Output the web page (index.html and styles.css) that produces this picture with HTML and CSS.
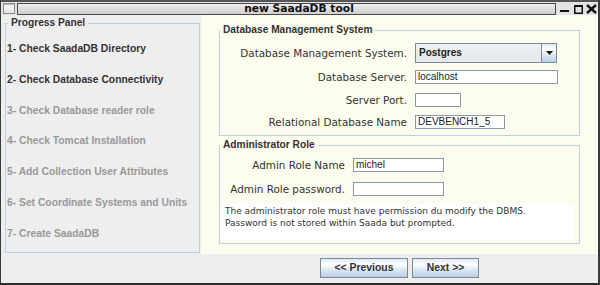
FILE: index.html
```html
<!DOCTYPE html>
<html>
<head>
<meta charset="utf-8">
<title>new SaadaDB tool</title>
<link rel="stylesheet" href="styles.css">
</head>
<body>
<div class="window">
  <div class="titlebar">
    <span class="ticon"></span>
    <div class="tbar">new SaadaDB tool</div>
    <svg class="tctl" viewBox="0 0 42 13" width="42" height="13">
      <rect x="4" y="8" width="9" height="2" fill="#111"/>
      <rect x="18.75" y="3.75" width="7.5" height="7.5" fill="none" stroke="#111" stroke-width="1.5"/>
      <rect x="18" y="3" width="9" height="2" fill="#111"/>
      <path d="M31 3 L40 11 M40 3 L31 11" stroke="#111" stroke-width="2.4" fill="none"/>
    </svg>
  </div>
  <div class="main">
    <div class="left">
      <fieldset class="progress">
        <legend>Progress Panel</legend>
        <ol class="steps">
          <li>1- Check SaadaDB Directory</li>
          <li>2- Check Database Connectivity</li>
          <li class="todo">3- Check Database reader role</li>
          <li class="todo">4- Check Tomcat Installation</li>
          <li class="todo">5- Add Collection User Attributes</li>
          <li class="todo">6- Set Coordinate Systems and Units</li>
          <li class="todo">7- Create SaadaDB</li>
        </ol>
      </fieldset>
    </div>
    <div class="right">
      <div class="panel">
        <fieldset class="group db">
          <legend>Database Management System</legend>
          <div class="form db-form">
            <label class="lbl tall">Database Management System.</label>
            <div class="combo">
              <span class="combo-val">Postgres</span>
              <span class="combo-btn"><svg width="7" height="4" viewBox="0 0 7 4"><path d="M0 0 H7 L3.5 4 Z" fill="#111"/></svg></span>
            </div>
            <label class="lbl">Database Server.</label>
            <div class="field w-server">localhost</div>
            <label class="lbl">Server Port.</label>
            <div class="field w-port"></div>
            <label class="lbl">Relational Database Name</label>
            <div class="field w-rdb">DEVBENCH1_5</div>
          </div>
        </fieldset>
        <fieldset class="group admin">
          <legend>Administrator Role</legend>
          <div class="form admin-form">
            <label class="lbl">Admin Role Name</label>
            <div class="field w-admin">michel</div>
            <label class="lbl">Admin Role password.</label>
            <div class="field w-admin"></div>
          </div>
          <div class="note">The administrator role must have permission du modify the DBMS.<br>Password is not stored within Saada but prompted.</div>
        </fieldset>
      </div>
      <div class="buttons">
        <button class="btn prev">&lt;&lt; Previous</button>
        <button class="btn next">Next &gt;&gt;</button>
      </div>
    </div>
  </div>
</div>
</body>
</html>
```
FILE: styles.css
```css
html, body {
  margin: 0;
  padding: 0;
  background: #eeeeee;
}

.window {
  width: 600px;
  height: 285px;
  box-sizing: border-box;
  border-left: 1px solid #3a3a3a;
  border-right: 2px solid #3a3a3a;
  border-bottom: 2px solid #2e2e2e;
  background: #eeeeee;
  display: flex;
  flex-direction: column;
  font-family: "DejaVu Sans", sans-serif;
  color: #333333;
}

/* ---------- title bar ---------- */
.titlebar {
  height: 15px;
  flex: none;
  box-sizing: border-box;
  border-top: 2px solid #555555;
  background: #e2e2e2;
  display: flex;
  align-items: flex-start;
}

.ticon {
  width: 12px;
  height: 11px;
  flex: none;
  box-sizing: border-box;
  margin: 1px 0 0 2px;
  border: 1px solid #8a8a8a;
  background: linear-gradient(#fbfbfb, #e4e4e4);
  box-shadow: inset 0 1px 0 #bdbdbd;
}

.tbar {
  flex: 1;
  height: 12px;
  margin: 1px 0 0 2px;
  box-sizing: border-box;
  border: 1px solid #4a4a4a;
  background: linear-gradient(#eeeeee, #cecece);
  padding-left: 25px;
  font: bold 10.7px/10px "DejaVu Sans", sans-serif;
  text-align: center;
  color: #111111;
  white-space: nowrap;
}

.tctl {
  width: 42px;
  height: 13px;
  flex: none;
}

/* ---------- main ---------- */
.main {
  flex: 1;
  min-height: 0;
  display: flex;
}

.left {
  width: 200px;
  flex: none;
}

fieldset {
  min-inline-size: 0;
  margin: 0;
  padding: 0;
  border: 1px solid #bcd0e4;
  box-sizing: border-box;
}

legend {
  padding: 0 3px;
  margin-left: 1px;
  font: bold 10.2px/12px "Liberation Sans", sans-serif;
  color: #333333;
  white-space: nowrap;
}

.progress {
  margin: 2px 0 0 4px;
  width: 195px;
  height: 236px;
  padding-left: 1px;
}

.steps {
  list-style: none;
  margin: 0;
  padding: 14px 0 0 0;
  display: flex;
  flex-direction: column;
  gap: 18.83px;
  font: bold 10.3px/12px "Liberation Sans", sans-serif;
  color: #333333;
  white-space: nowrap;
}

.steps .todo {
  color: #999999;
}

/* ---------- right side ---------- */
.right {
  flex: 1;
  min-width: 0;
  display: flex;
  flex-direction: column;
}

.panel {
  height: 239px;
  flex: none;
  box-sizing: border-box;
  background: #fcfcef;
  padding: 9px 0 0 18px;
}

.group {
  width: 361px;
}

.group legend {
  margin-left: 0;
}

.db {
  padding: 7px 0 6px 0;
}

.admin {
  margin-top: 3px;
  padding: 7px 0 3px 0;
}

.form {
  display: grid;
  column-gap: 8px;
  align-items: start;
  justify-items: start;
}

.db-form {
  grid-template-columns: 187px auto;
  grid-template-rows: 27px 23px 22px 14px;
}

.admin-form {
  grid-template-columns: 125px auto;
  grid-template-rows: 24px 14px;
}

.lbl {
  justify-self: end;
  font: 10.4px/14px "DejaVu Sans", sans-serif;
  color: #333333;
  white-space: nowrap;
}

.lbl.tall {
  line-height: 20px;
}

.field {
  height: 14px;
  box-sizing: border-box;
  border: 1px solid #8c98a4;
  background: #ffffff;
  padding-left: 2px;
  font: 10px/12px "Liberation Sans", sans-serif;
  color: #222222;
  white-space: nowrap;
  overflow: hidden;
}

.w-server { width: 143px; }
.w-port { width: 46px; }
.w-rdb { width: 90px; }
.w-admin { width: 91px; }

.combo {
  width: 142px;
  height: 20px;
  box-sizing: border-box;
  border: 1px solid #7a8a99;
  background: linear-gradient(#eff1f3, #e6e9ec);
  display: flex;
}

.combo-val {
  flex: 1;
  padding-left: 3px;
  font: bold 10px/18px "Liberation Sans", sans-serif;
  color: #222222;
}

.combo-btn {
  width: 14px;
  flex: none;
  border-left: 1px solid #7a8a99;
  background: linear-gradient(#dde8f3, #ffffff 30%, #dde8f3 60%, #b8cfe5);
  display: flex;
  align-items: center;
  justify-content: center;
}

.note {
  margin: 8px 0 0 2px;
  width: 352px;
  height: 36px;
  box-sizing: border-box;
  background: #ffffff;
  padding: 1px 0 0 3px;
  font: 9px/12px "DejaVu Sans", sans-serif;
  color: #333333;
  white-space: nowrap;
}

/* ---------- buttons ---------- */
.buttons {
  flex: 1;
  display: flex;
  justify-content: center;
  align-items: flex-start;
  gap: 4px;
  padding-top: 4px;
  box-sizing: border-box;
}

.btn {
  height: 20px;
  box-sizing: border-box;
  border: 1px solid #7a8a99;
  border-radius: 0;
  background: linear-gradient(#dde8f3, #ffffff 30%, #dde8f3 60%, #b8cfe5);
  padding: 0;
  font: bold 10.4px/18px "Liberation Sans", sans-serif;
  color: #333333;
}

.prev { width: 88px; }
.next { width: 67px; }
```
